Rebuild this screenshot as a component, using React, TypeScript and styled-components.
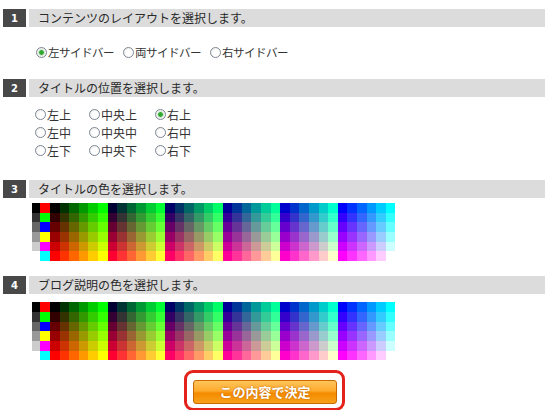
import styled, { createGlobalStyle } from 'styled-components';

const GlobalStyle = createGlobalStyle`
  html, body { margin: 0; padding: 0; background: #fff; }
  body {
    font-family: "Noto Sans CJK JP", "DejaVu Sans", sans-serif;
    color: #222;
  }
`;

const Page = styled.div`
  width: 542px;
  padding: 9px 0 0 3px;
`;

const Header = styled.div<{ $top: number }>`
  display: flex;
  height: 18px;
  margin-top: ${p => p.$top}px;
  gap: 3px;
`;

const Num = styled.div`
  width: 23px;
  background: #484848;
  color: #fff;
  font-family: "DejaVu Sans", sans-serif;
  font-weight: bold;
  font-size: 10px;
  display: flex;
  align-items: center;
  justify-content: center;
`;

const Title = styled.div`
  flex: 1;
  background: #dcdcdc;
  font-size: 12px;
  line-height: 18px;
  padding-left: 9px;
  color: #2a2a2a;
`;

const RadioRow = styled.div<{ $top: number }>`
  display: flex;
  gap: 9px;
  margin: ${p => p.$top}px 0 0 33px;
  height: 16px;
`;

const RadioGrid = styled.div<{ $top: number }>`
  display: grid;
  grid-template-columns: 54px 66px auto;
  grid-auto-rows: 18px;
  margin: ${p => p.$top}px 0 0 32px;
`;

const Label = styled.label<{ $tight?: boolean }>`
  display: flex;
  align-items: center;
  gap: 1px;
  font-size: ${p => (p.$tight ? '11.5px' : '12px')};
  letter-spacing: ${p => (p.$tight ? '-0.5px' : '0')};
  color: #333;
  white-space: nowrap;
`;

const Dot = styled.span<{ $on?: boolean }>`
  width: 11px;
  height: 11px;
  box-sizing: border-box;
  border-radius: 50%;
  border: 1px solid #7d8793;
  background: ${p =>
    p.$on
      ? 'radial-gradient(circle, #32a832 0 2px, #a6dca6 2.5px, #f4f4f4 3.5px, #e2e2e2 100%)'
      : 'radial-gradient(circle at 60% 60%, #ffffff 0 3px, #e4e4e4 100%)'};
  flex: none;
`;

const Palette = styled.div<{ $top: number }>`
  display: grid;
  grid-template-columns: 8px 10px repeat(36, 9.6px);
  grid-template-rows: repeat(6, 9.7px);
  margin: ${p => p.$top}px 0 0 29px;
  width: max-content;
`;

const Cell = styled.div.attrs<{ $c: string }>(p => ({ style: { background: p.$c } }))<{ $c: string }>``;

const ButtonArea = styled.div`
  display: flex;
  padding-left: 181px;
  margin-top: 10px;
`;

const Ring = styled.div`
  border: 3px solid #e3231b;
  border-radius: 9px;
  padding: 5px 5px 4px 6px;
`;

const Submit = styled.button`
  width: 144px;
  height: 24px;
  border: 1px solid #c96a00;
  border-radius: 3px;
  background: linear-gradient(#ffc55a 0%, #ffab2e 45%, #f58a00 55%, #f7a21a 100%);
  color: #fff;
  font-family: "Noto Sans CJK JP", sans-serif;
  font-weight: bold;
  font-size: 13px;
  text-shadow: 0 0 2px #b35a00;
  padding: 0;
  cursor: pointer;
`;

const greys = ['#000', '#333', '#666', '#999', '#ccc', '#fff'];
const primaries = ['#f00', '#0f0', '#00f', '#ff0', '#f0f', '#0ff'];

const paletteColors: string[] = [];
for (let r = 0; r < 6; r++) {
  paletteColors.push(greys[r], primaries[r]);
  for (let b = 0; b < 6; b++) {
    for (let g = 0; g < 6; g++) {
      paletteColors.push(`rgb(${r * 51},${g * 51},${b * 51})`);
    }
  }
}

const ColorPalette = ({ top }: { top: number }) => (
  <Palette $top={top}>
    {paletteColors.map((c, i) => (
      <Cell key={i} $c={c} />
    ))}
  </Palette>
);

const positions = ['左上', '中央上', '右上', '左中', '中央中', '右中', '左下', '中央下', '右下'];

export default function App() {
  return (
    <Page>
      <GlobalStyle />
      <Header $top={0}>
        <Num>1</Num>
        <Title>コンテンツのレイアウトを選択します。</Title>
      </Header>
      <RadioRow $top={17}>
        <Label $tight><Dot $on />左サイドバー</Label>
        <Label $tight><Dot />両サイドバー</Label>
        <Label $tight><Dot />右サイドバー</Label>
      </RadioRow>
      <Header $top={19}>
        <Num>2</Num>
        <Title>タイトルの位置を選択します。</Title>
      </Header>
      <RadioGrid $top={8}>
        {positions.map(p => (
          <Label key={p}><Dot $on={p === '右上'} />{p}</Label>
        ))}
      </RadioGrid>
      <Header $top={21}>
        <Num>3</Num>
        <Title>タイトルの色を選択します。</Title>
      </Header>
      <ColorPalette top={5} />
      <Header $top={15}>
        <Num>4</Num>
        <Title>ブログ説明の色を選択します。</Title>
      </Header>
      <ColorPalette top={8} />
      <ButtonArea>
        <Ring>
          <Submit>この内容で決定</Submit>
        </Ring>
      </ButtonArea>
    </Page>
  );
}
